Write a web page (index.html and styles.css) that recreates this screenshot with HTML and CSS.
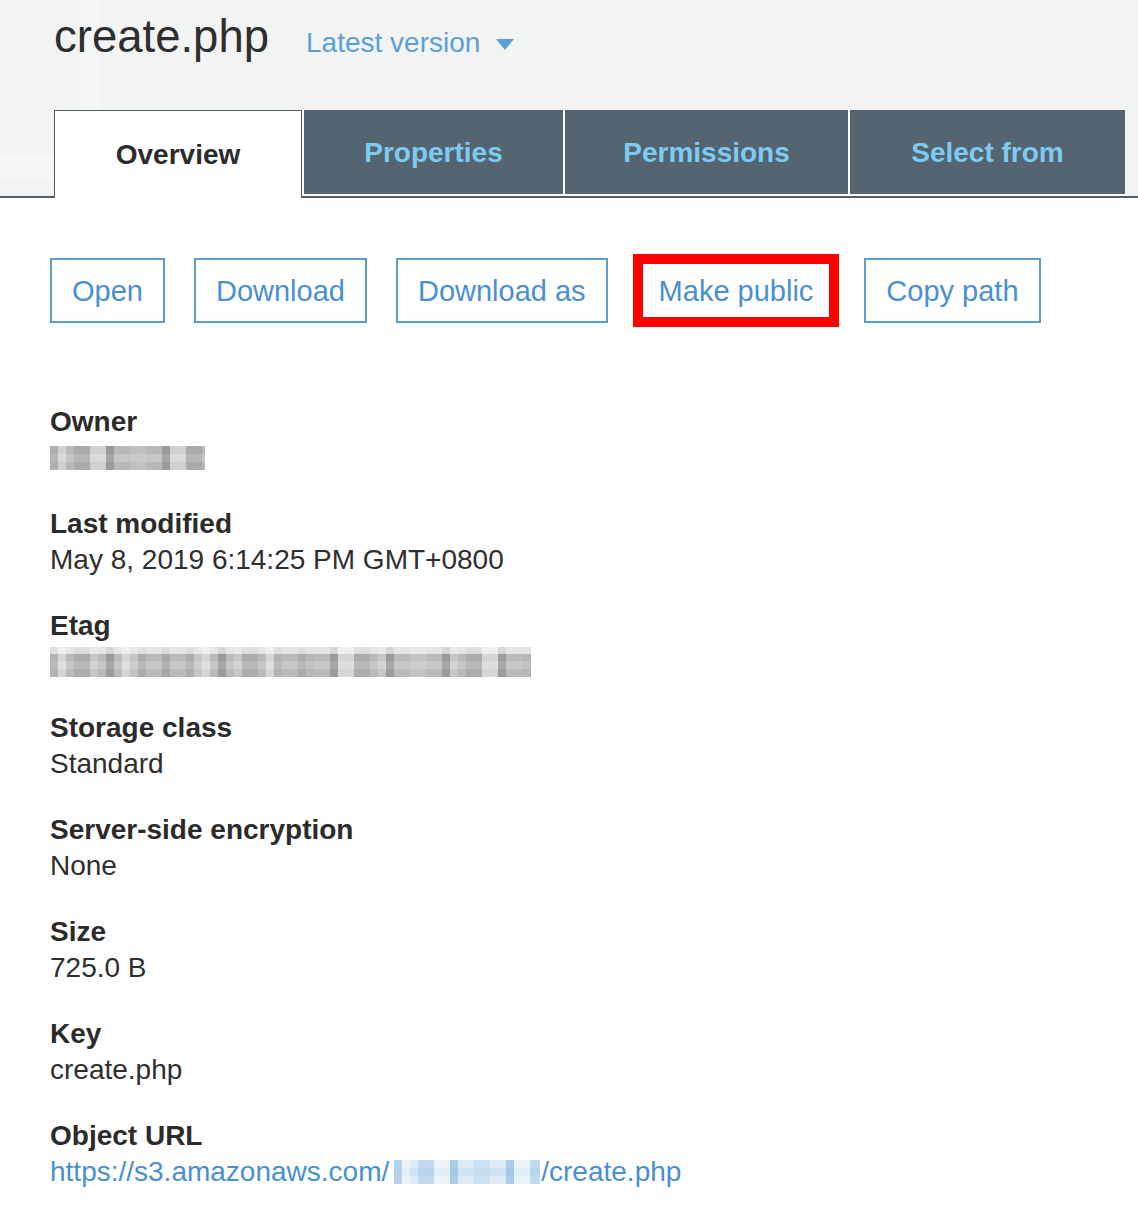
FILE: index.html
```html
<!DOCTYPE html>
<html lang="en">
<head>
<meta charset="utf-8">
<title>create.php</title>
<link rel="stylesheet" href="styles.css">
</head>
<body>
<header class="header">
  <div class="title-row">
    <h1 class="title">create.php</h1>
    <button class="version">Latest version<span class="caret"></span></button>
  </div>
  <nav class="tabs">
    <a class="tab tab-active tab-overview">Overview</a>
    <a class="tab tab-properties">Properties</a>
    <a class="tab tab-permissions">Permissions</a>
    <a class="tab tab-select">Select from</a>
  </nav>
</header>
<main class="content">
  <div class="actions">
    <button class="btn">Open</button>
    <button class="btn">Download</button>
    <button class="btn">Download as</button>
    <button class="btn btn-highlight">Make public</button>
    <button class="btn">Copy path</button>
  </div>
  <dl class="details">
    <div class="field">
      <dt class="label">Owner</dt>
      <dd class="value"><span class="redacted redacted-owner"></span></dd>
    </div>
    <div class="field">
      <dt class="label">Last modified</dt>
      <dd class="value">May 8, 2019 6:14:25 PM GMT+0800</dd>
    </div>
    <div class="field">
      <dt class="label">Etag</dt>
      <dd class="value"><span class="redacted redacted-etag"></span></dd>
    </div>
    <div class="field">
      <dt class="label">Storage class</dt>
      <dd class="value">Standard</dd>
    </div>
    <div class="field">
      <dt class="label">Server-side encryption</dt>
      <dd class="value">None</dd>
    </div>
    <div class="field">
      <dt class="label">Size</dt>
      <dd class="value">725.0 B</dd>
    </div>
    <div class="field">
      <dt class="label">Key</dt>
      <dd class="value">create.php</dd>
    </div>
    <div class="field">
      <dt class="label">Object URL</dt>
      <dd class="value"><a class="url">https://s3.amazonaws.com/<span class="redacted redacted-url"></span>/create.php</a></dd>
    </div>
  </dl>
</main>
</body>
</html>
```

FILE: styles.css
```css
* { box-sizing: border-box; }

html, body {
  margin: 0;
  padding: 0;
  background: #ffffff;
}

body {
  font-family: "Liberation Sans", Arial, Helvetica, sans-serif;
  color: #2e2e2e;
}

.header {
  background:
    linear-gradient(90deg, transparent 80px, #f5f6f6 80px 100px, transparent 100px) 0 0 / 100% 155px no-repeat,
    linear-gradient(#f6f7f7, #f6f7f7) 0 155px / 54px 25px no-repeat,
    #f2f3f3;
  border-bottom: 2px solid #545b64;
}

.title-row {
  height: 110px;
  padding: 7px 0 0 54px;
  display: flex;
  align-items: baseline;
  gap: 37px;
}

.title {
  margin: 0;
  font-size: 45.5px;
  line-height: 60px;
  font-weight: 400;
  color: #2e2e2e;
}

.version {
  border: 0;
  background: none;
  padding: 0;
  font-family: inherit;
  font-size: 28px;
  color: #5a9fd6;
  display: inline-flex;
  align-items: center;
  gap: 16px;
  cursor: pointer;
}

.caret {
  width: 0;
  height: 0;
  border-left: 9.5px solid transparent;
  border-right: 9.5px solid transparent;
  border-top: 11px solid #5a9fd6;
  margin-top: 2px;
}

.tabs {
  display: flex;
  gap: 2px;
  margin-left: 54px;
  width: 1071px;
  height: 86px;
  background: #ffffff;
  align-items: flex-start;
}

.tab {
  height: 84px;
  padding-top: 2px;
  display: flex;
  align-items: center;
  justify-content: center;
  font-size: 28px;
  font-weight: 700;
  background: #546471;
  color: #7dcbee;
  text-decoration: none;
}

.tab-active {
  height: 88px;
  margin-bottom: -2px;
  background: #ffffff;
  color: #2b2b2b;
  border: 1px solid #545b64;
  border-bottom: 0;
  padding-top: 0;
}

.tab-overview { width: 248px; }
.tab-properties { width: 259px; }
.tab-permissions { width: 283px; }
.tab-select { width: 275px; }

.content {
  padding: 60px 0 40px 50px;
}

.actions {
  display: flex;
  gap: 29px;
}

.btn {
  height: 65px;
  padding: 2px 20px 0;
  border: 2px solid #5b9bd1;
  background: #ffffff;
  color: #4a8fcf;
  font-family: inherit;
  font-size: 29px;
  cursor: pointer;
}

.btn-highlight {
  box-shadow: 0 0 0 4px #ff0000, inset 0 0 0 4px #ff0000;
  border-color: #ff0000;
}

.details {
  margin: 81px 0 0;
}

.field {
  margin-bottom: 30px;
}

.label {
  font-size: 28px;
  line-height: 36px;
  font-weight: 700;
  color: #2b2b2b;
}

.value {
  margin: 0;
  font-size: 28px;
  line-height: 36px;
  color: #2e2e2e;
  height: 36px;
  display: flex;
  align-items: center;
}

.url {
  color: #4a8fcf;
  text-decoration: none;
  display: inline-flex;
  align-items: center;
}

.redacted {
  display: inline-block;
}

.redacted-owner {
  width: 155px;
  height: 24px;
  background:
    repeating-linear-gradient(90deg, rgba(0,0,0,.16) 0 8px, transparent 8px 24px, rgba(0,0,0,.08) 24px 40px, transparent 40px 56px),
    repeating-linear-gradient(90deg, rgba(255,255,255,.35) 0 16px, transparent 16px 40px),
    repeating-linear-gradient(0deg, rgba(0,0,0,.07) 0 8px, transparent 8px 16px),
    #c6c6c6;
}

.redacted-etag {
  width: 481px;
  height: 30px;
  background:
    linear-gradient(180deg, rgba(255,255,255,.55) 0 7px, transparent 7px),
    repeating-linear-gradient(90deg, rgba(0,0,0,.16) 0 8px, transparent 8px 24px, rgba(0,0,0,.08) 24px 40px, transparent 40px 56px),
    repeating-linear-gradient(90deg, rgba(255,255,255,.4) 0 16px, transparent 16px 40px, rgba(255,255,255,.2) 40px 48px, transparent 48px 72px),
    repeating-linear-gradient(0deg, rgba(0,0,0,.07) 0 8px, transparent 8px 16px),
    #c8c8c8;
}

.redacted-url {
  width: 146px;
  height: 24px;
  margin: 0 1px 0 5px;
  background:
    repeating-linear-gradient(90deg, rgba(80,150,210,.35) 0 8px, transparent 8px 24px, rgba(80,150,210,.2) 24px 40px, transparent 40px 56px),
    repeating-linear-gradient(90deg, rgba(255,255,255,.4) 0 16px, transparent 16px 40px),
    repeating-linear-gradient(0deg, rgba(255,255,255,.3) 0 8px, transparent 8px 16px),
    #cfe3f3;
}
```
